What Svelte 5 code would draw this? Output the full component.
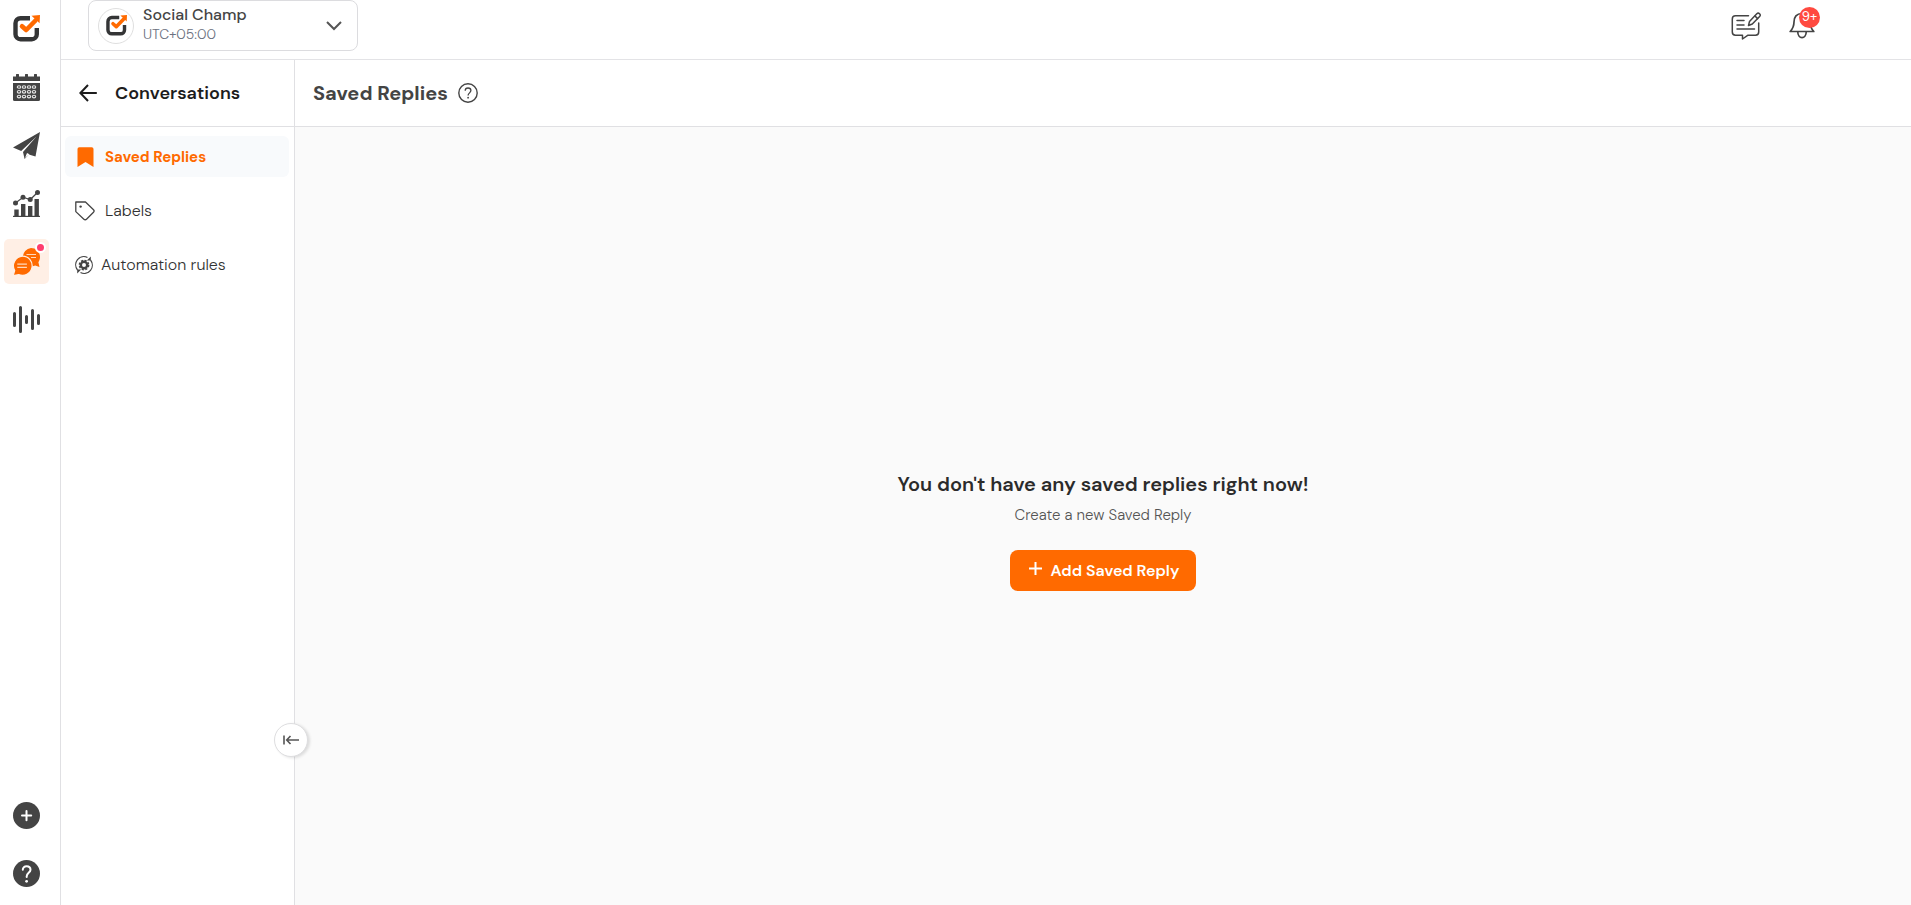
<script lang="ts">
	let active = $state('Saved Replies');
	let collapsed = $state(false);

	const links = ['Saved Replies', 'Labels', 'Automation rules'];
	const dots = [0, 1, 2].flatMap((r) => [0, 1, 2, 3].map((c) => [c, r]));
</script>

{#snippet logo(size)}
	<svg width={size} height={size} viewBox="0 0 27 27" fill="none">
		<path
			d="M17 3.200H7.500a5 5 0 0 0-5 5v11a5 5 0 0 0 5 5h11.300a5 5 0 0 0 5-5V13"
			stroke="#343536"
			stroke-width="4.400"
		/>
		<path
			d="M9 11.200l4.200 3.800L22.500 5.500"
			stroke="#ff6a00"
			stroke-width="4.600"
			stroke-linecap="round"
			stroke-linejoin="round"
		/>
		<path d="M18.500.800L27 0l-.4 8.200z" fill="#ff6a00" />
	</svg>
{/snippet}

<div class="app">
	<nav class="rail" aria-label="Main">
		<a class="brand" href="#home" aria-label="Home">{@render logo(27)}</a>
		<a href="#calendar" aria-label="Calendar">
			<svg width="27" height="27" viewBox="0 0 27 27">
				<path
					d="M0 7V2.500h3V1a1.500 1.500 0 0 1 3 0v1.500h6V1a1.500 1.500 0 0 1 3 0v1.500h6V1a1.500 1.500 0 0 1 3 0v1.500h3V7z"
					fill="#444"
				/>
				<path d="M0 9h27v16.500a1.500 1.500 0 0 1-1.500 1.500h-24A1.500 1.500 0 0 1 0 25.500z" fill="#444" />
				{#each dots as [c, r]}
					<ellipse
						cx={6 + c * 5}
						cy={13 + r * 4.8}
						rx="1.700"
						ry="1.300"
						fill="none"
						stroke="#e4e4e4"
						stroke-width="1.100"
					/>
				{/each}
			</svg>
		</a>
		<a href="#publish" aria-label="Publish">
			<svg width="27" height="27" viewBox="0 0 27 27" fill="#444">
				<path d="M27 0L0 15.500l8.200 3.500L23.500 4.500 10 20l1.600 7 4.200-4.500 6.700 2z" />
				<path d="M12 26l2-5 2.500 1.200z" fill="#fff" />
			</svg>
		</a>
		<a href="#analytics" aria-label="Analytics">
			<svg width="27" height="27" viewBox="0 0 27 27" fill="#444">
				<path d="M1.300 19.500h4.400V26H1.300zM8 14h4.400v12H8zM15 16h4.400v10H15zM21.500 9h4.400v17h-4.400z" />
				<path d="M0 25.800h27V27H0z" />
				<path d="M2.500 13L10 7.300l7.300 2.200L24.500 2.500" fill="none" stroke="#444" stroke-width="1.200" />
				<circle cx="2.500" cy="13" r="2.500" />
				<circle cx="10" cy="7.200" r="2.500" />
				<circle cx="17.200" cy="9.500" r="2.500" />
				<circle cx="24.500" cy="2.500" r="2.500" />
			</svg>
		</a>
		<a class="current" href="#engage" aria-label="Engage">
			<svg width="27" height="27" viewBox="0 0 27 27" fill="#ff6a00">
				<path d="M18 0c5 0 9 4 9 9 0 2-.6 3.800-1.600 5.200L26.500 19l-4.300-1.500c-1.300.6-2.700.8-4.200.6A9.100 9.100 0 0 1 18 0z" />
				<path d="M13.500 6.500H23M18 9.500h5" stroke="#ffd9bd" stroke-width="1.200" />
				<path
					d="M9.500 8.200a9.600 9.600 0 1 1-3.800 18.400L.2 27.500l1.500-5A9.600 9.600 0 0 1 9.500 8.200z"
					stroke="#ffefe5"
					stroke-width="1.200"
				/>
				<path d="M4.300 16.200h9.600M4.300 19.300h9.600" stroke="#ffd9bd" stroke-width="1.300" />
			</svg>
			<span class="dot"></span>
		</a>
		<a href="#listening" aria-label="Listening">
			<svg
				width="27"
				height="27"
				viewBox="0 0 27 27"
				stroke="#444"
				stroke-width="3"
				stroke-linecap="round"
			>
				<path d="M1.500 7.500v12M7.500 1.500v24M13.500 10.500v6M19.500 4.500v18M25.500 9.500v8" />
			</svg>
		</a>
		<button class="push" aria-label="Add">
			<svg width="27" height="27" viewBox="0 0 27 27">
				<circle cx="13.500" cy="13.500" r="13.500" fill="#444" />
				<path d="M13.500 9v9.200M9 13.600h9.200" stroke="#fff" stroke-width="2" stroke-linecap="round" />
			</svg>
		</button>
		<button aria-label="Help">
			<svg width="27" height="27" viewBox="0 0 27 27" fill="none">
				<circle cx="13.500" cy="13.500" r="13.500" fill="#444" />
				<path
					d="M9.800 9.800c0-2.300 1.600-3.600 3.800-3.600s3.900 1.400 3.900 3.500c0 3-3.800 3.300-3.800 6.600v.7"
					stroke="#fff"
					stroke-width="2"
					stroke-linecap="round"
				/>
				<circle cx="13.600" cy="21.300" r="1.400" fill="#fff" />
			</svg>
		</button>
	</nav>

	<div class="page">
		<header class="topbar">
			<button class="account">
				<span class="avatar">{@render logo(21)}</span>
				<span class="who">
					<span class="name">Social Champ</span>
					<span class="zone">UTC+05:00</span>
				</span>
				<svg width="16" height="10" viewBox="0 0 16 10" fill="none" stroke="#555" stroke-width="2">
					<path d="M1 1l7 7 7-7" />
				</svg>
			</button>
			<div class="tools">
				<button aria-label="Feedback">
					<svg
						width="30"
						height="28"
						viewBox="0 0 30 28"
						fill="none"
						stroke="#444"
						stroke-width="1.500"
						stroke-linejoin="round"
						stroke-linecap="round"
					>
						<path d="M17.500 3.800H4.500A3.200 3.200 0 0 0 1.300 7v13a3.200 3.200 0 0 0 3.200 3.200h7V27l5.500-3.800h7.500a3.200 3.200 0 0 0 3.200-3.200v-9" />
						<path d="M6 8.500h7M6 13h7M6 17h17.500" />
						<path d="M17.500 13.500l1-4L25.800 1.800a1.900 1.900 0 0 1 2.800 2.700L21.300 12z" />
						<path d="M24 4l2.600 2.600" />
					</svg>
				</button>
				<button class="bell" aria-label="Notifications">
					<svg
						width="26"
						height="28"
						viewBox="0 0 26 28"
						fill="none"
						stroke="#444"
						stroke-width="1.700"
						stroke-linejoin="round"
					>
						<path d="M13 1.500c-5.500 0-8 3.500-8 8.500 0 5-1.500 7-3.800 9.500h23.600C22.500 17 21 15 21 10c0-5-2.500-8.500-8-8.500z" />
						<path d="M8.800 20a4.200 5.600 0 0 0 8.400 0" />
					</svg>
					<span class="badge">9+</span>
				</button>
			</div>
		</header>

		<div class="body">
			<aside class="side" class:collapsed>
				<div class="side-head">
					<a class="back" href="#back" aria-label="Back">
						<svg width="18" height="18" viewBox="0 0 18 18" fill="none" stroke="#1d1d1d" stroke-width="2">
							<path d="M17.800 9H1.500M9 1L1.400 9 9 17" />
						</svg>
					</a>
					<h2>Conversations</h2>
				</div>
				<nav class="links" aria-label="Conversations">
					{#each links as link}
						<a href="#{link}" class:on={link === active} onclick={() => (active = link)}>
							{#if link === 'Saved Replies'}
								<svg width="20" height="20" viewBox="0 0 20 20" fill="#ff6a00">
									<path d="M2.500 20V2a1.800 1.800 0 0 1 1.800-1.800h12.400A1.800 1.800 0 0 1 18.500 2v18l-8-5z" />
								</svg>
							{:else if link === 'Labels'}
								<svg
									width="20"
									height="20"
									viewBox="0 0 20 20"
									fill="none"
									stroke="#444"
									stroke-width="1.300"
									stroke-linejoin="round"
								>
									<path d="M.8 1h9.700l8 7.700a1.800 1.800 0 0 1 0 2.500l-7 7a1.800 1.800 0 0 1-2.600 0L.8 10.600z" />
									<circle cx="5.600" cy="5.600" r="1.200" fill="#444" stroke="none" />
								</svg>
							{:else}
								<svg class="small" width="18" height="18" viewBox="0 0 18 18" fill="none" stroke="#444">
									<path d="M12.500 1.500A8.200 8.200 0 0 0 2.500 14M5.500 16.500A8.200 8.200 0 0 0 15.500 4" stroke-width="1.200" />
									<path d="M15.800.500v4h-4zM2.200 17.500v-4h4z" fill="#444" stroke="none" />
									<circle cx="9" cy="9" r="3.200" stroke-width="2.400" />
									<circle cx="9" cy="9" r="4.700" stroke-width="1.400" stroke-dasharray="2.200 1.490" />
								</svg>
							{/if}
							{link}
						</a>
					{/each}
				</nav>
				<button class="collapse" aria-label="Collapse sidebar" onclick={() => (collapsed = !collapsed)}>
					<svg width="16" height="10" viewBox="0 0 16 10" fill="none" stroke="#555" stroke-width="1.600">
						<path d="M1 .500v9M16 5H4M7.500 1L3.700 5l3.800 4" />
					</svg>
				</button>
			</aside>

			<main>
				<div class="main-head">
					<h1>Saved Replies</h1>
					<button aria-label="About saved replies">
						<svg width="20" height="20" viewBox="0 0 20 20" fill="none" stroke="#444">
							<circle cx="10" cy="10" r="9.200" stroke-width="1.400" />
							<path d="M7.200 7.800c0-1.800 1.200-2.800 2.800-2.800s2.900 1 2.900 2.600c0 2.200-2.800 2.400-2.800 4.900" stroke-width="1.300" />
							<circle cx="10.100" cy="14.700" r=".9" fill="#444" stroke="none" />
						</svg>
					</button>
				</div>
				<section class="empty">
					<h3>You don't have any saved replies right now!</h3>
					<p>Create a new Saved Reply</p>
					<button class="add">
						<svg width="13" height="13" viewBox="0 0 13 13" stroke="#fff" stroke-width="2">
							<path d="M6.500 0v13M0 6.500h13" />
						</svg>
						Add Saved Reply
					</button>
				</section>
			</main>
		</div>
	</div>
</div>

<style>
	:global(body) {
		font-family: 'DM Sans', Inter, 'Liberation Sans', sans-serif;
		color: #444;
		background: #fff;
	}

	button {
		padding: 0;
		border: none;
		background: none;
		font-family: inherit;
		color: inherit;
		cursor: pointer;
	}

	a {
		color: inherit;
		text-decoration: none;
	}

	svg {
		display: block;
		flex: none;
	}

	h1,
	h2,
	h3,
	p {
		margin: 0;
	}

	.app {
		display: flex;
		height: 100vh;
		overflow: hidden;
	}

	.rail {
		display: flex;
		flex-direction: column;
		gap: 13px;
		flex: none;
		width: 56px;
		padding: 6px 0 9px 4px;
		border-right: 1px solid #e0e0e3;
	}

	.rail a,
	.rail button {
		position: relative;
		display: flex;
		align-items: center;
		justify-content: center;
		width: 45px;
		height: 45px;
		border-radius: 5px;
	}

	.rail .brand {
		margin-bottom: 1px;
	}

	.rail .current {
		background: #ffefe5;
	}

	.rail .push {
		margin-top: auto;
	}

	.dot {
		position: absolute;
		top: 3px;
		right: 3px;
		width: 7px;
		height: 7px;
		border: 2px solid #fff;
		border-radius: 50%;
		background: #ff3d6e;
	}

	.page {
		display: flex;
		flex-direction: column;
		flex: 1;
		min-width: 0;
	}

	.topbar {
		display: flex;
		align-items: flex-start;
		justify-content: space-between;
		height: 59px;
		padding: 0 96px 0 27px;
		border-bottom: 1px solid #e3e3e6;
	}

	.account {
		display: flex;
		align-items: center;
		box-sizing: border-box;
		width: 270px;
		height: 51px;
		padding: 0 15px 0 9px;
		border: 1px solid #dcdcdf;
		border-radius: 8px;
		text-align: left;
	}

	.avatar {
		display: flex;
		align-items: center;
		justify-content: center;
		width: 34px;
		height: 34px;
		margin-right: 9px;
		border: 1px solid #dfdfdf;
		border-radius: 50%;
	}

	.who {
		display: flex;
		flex-direction: column;
		flex: 1;
		padding-bottom: 3px;
	}

	.name {
		font-size: 16px;
		line-height: 20px;
		font-weight: 500;
	}

	.zone {
		font-size: 14px;
		line-height: 18px;
		font-weight: 300;
		color: #6b7180;
	}

	.tools {
		display: flex;
		gap: 28px;
		padding-top: 12px;
	}

	.bell {
		position: relative;
	}

	.badge {
		position: absolute;
		top: -5px;
		right: -5px;
		width: 21px;
		height: 21px;
		border-radius: 50%;
		background: #ff4a40;
		color: #fff;
		font-size: 13px;
		line-height: 20px;
		text-align: center;
	}

	.body {
		display: flex;
		flex: 1;
		min-height: 0;
	}

	.side {
		position: relative;
		flex: none;
		width: 233px;
		border-right: 1px solid #e0e0e3;
	}

	.side.collapsed {
		width: 60px;
	}

	.side.collapsed h2 {
		display: none;
	}

	.side.collapsed .links a {
		overflow: hidden;
	}

	.side-head,
	.main-head {
		display: flex;
		align-items: center;
		height: 66px;
		border-bottom: 1px solid #e0e0e3;
	}

	.side-head {
		gap: 18px;
		padding-left: 18px;
	}

	h2 {
		color: #1d1d1d;
		font-size: 18px;
		font-weight: 600;
	}

	.links {
		display: flex;
		flex-direction: column;
		gap: 13px;
		padding: 9px 5px 9px 4px;
	}

	.links a {
		display: flex;
		align-items: center;
		gap: 10px;
		height: 41px;
		padding-left: 10px;
		border-radius: 6px;
		color: #333;
		font-size: 16px;
		font-weight: 300;
		white-space: nowrap;
	}

	.links .small {
		margin-right: -2px;
	}

	.links a.on {
		background: #f8fafc;
		color: #ff6a00;
		font-weight: 700;
		font-size: 15px;
	}

	.collapse {
		position: absolute;
		right: -14px;
		bottom: 148px;
		display: flex;
		align-items: center;
		justify-content: center;
		width: 34px;
		height: 34px;
		border: 1px solid #dedee0;
		border-radius: 50%;
		background: #fff;
		box-shadow: 2px 1px 3px #0000001f;
	}

	main {
		display: flex;
		flex-direction: column;
		flex: 1;
		min-width: 0;
		background: #fafafa;
	}

	.main-head {
		gap: 10px;
		padding-left: 18px;
		background: #fff;
	}

	h1 {
		font-size: 20px;
		font-weight: 700;
	}

	.empty {
		display: flex;
		flex-direction: column;
		align-items: center;
		justify-content: center;
		flex: 1;
		padding-top: 28px;
	}

	h3 {
		margin-bottom: 6px;
		color: #2b2b2b;
		font-size: 20px;
		line-height: 28px;
		font-weight: 600;
	}

	p {
		margin-bottom: 24px;
		color: #555;
		font-size: 15px;
		line-height: 22px;
		font-weight: 300;
	}

	.add {
		display: flex;
		align-items: center;
		gap: 9px;
		height: 41px;
		padding: 0 17px 0 19px;
		border-radius: 8px;
		background: #ff6a00;
		color: #fff;
		font-size: 16px;
		font-weight: 600;
	}

	.add svg {
		margin-bottom: 4px;
	}
</style>
